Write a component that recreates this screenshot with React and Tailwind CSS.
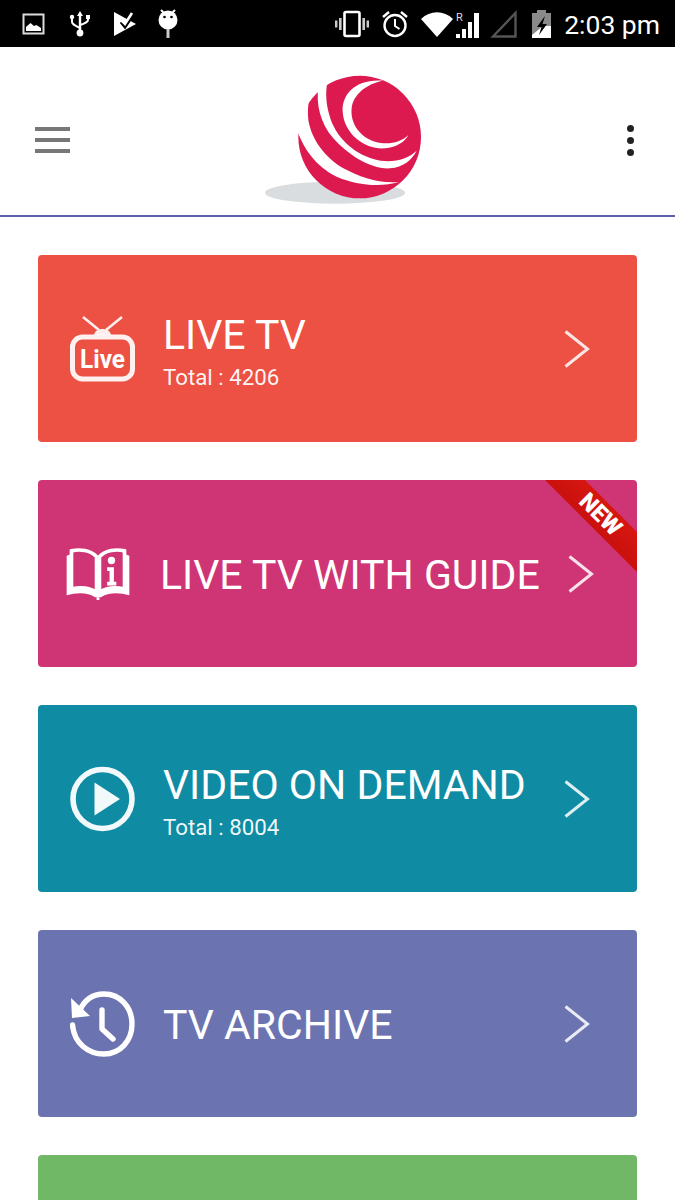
const Chevron = ({ className }) => (
  <svg className={className} width="28" height="40" viewBox="0 0 28 40" fill="none">
    <path d="M1.5 2.5 L23.5 20 L1.5 37.5" stroke="#fff" strokeWidth="3" opacity="0.85" />
  </svg>
);

const LiveIcon = () => (
  <svg width="68" height="68" viewBox="0 0 68 68" fill="none">
    <path d="M14 2 L30 15 M53 2 L37 15" stroke="#fff" strokeWidth="2.6" opacity="0.9" />
    <path d="M25 20 C26 12 41 12 42 20 Z" fill="#fff" opacity="0.9" />
    <rect x="3.5" y="22" width="60" height="42" rx="10" stroke="#fff" strokeWidth="5" opacity="0.92" />
    <text x="33.5" y="53" textAnchor="middle" fill="#fff" fontFamily="Roboto, sans-serif" fontWeight="700" fontSize="25" textLength="45" lengthAdjust="spacingAndGlyphs">Live</text>
  </svg>
);

const BookIcon = () => (
  <svg width="66" height="54" viewBox="0 0 68 56" fill="none">
    <path d="M7 7 L1.5 9 L1.5 50 C12 47 24 47 31 52 L37 52 C44 47 56 47 66.5 50 L66.5 9 L61 7 L61 44 C52 42 42 43 36 47 L32 47 C26 43 16 42 7 44 Z" fill="#fff" />
    <path d="M32.5 10 C26 3 15 2 6.5 4 L6.5 43.5 C16 41.5 26 42.5 32.5 47 Z M35.5 10 C42 3 53 2 61.5 4 L61.5 43.5 C52 41.5 42 42.5 35.5 47 Z" stroke="#fff" strokeWidth="3.8" />
    <path d="M34 52 V55" stroke="#fff" strokeWidth="3" />
    <circle cx="48" cy="14" r="3.8" fill="#fff" />
    <path d="M43.5 21 H50.5 V36 H53 V40 H43.5 V36 H46 V25 H43.5 Z" fill="#fff" />
  </svg>
);

const PlayIcon = () => (
  <svg width="66" height="66" viewBox="0 0 66 66" fill="none">
    <circle cx="32.5" cy="33" r="29.5" stroke="#fff" strokeWidth="5.6" opacity="0.95" />
    <path d="M24.5 16.5 L50 33 L24.5 49.5 Z" fill="#fff" opacity="0.95" />
  </svg>
);

const HistoryIcon = () => (
  <svg width="66" height="66" viewBox="0 0 66 66" fill="none">
    <path d="M9 21 C14 9 23 3 34 3 C50 3 62 16 62 33 C62 50 50 63 34 63 C18 63 4 52 2.5 34" stroke="#fff" strokeWidth="5.4" strokeLinecap="round" />
    <path d="M1 7 L2 27 L20 25 Z" fill="#fff" />
    <path d="M32 19 V38 L43 48" stroke="#fff" strokeWidth="5.4" strokeLinecap="round" strokeLinejoin="round" />
  </svg>
);

const StatusLeft = () => (
  <div className="flex items-center">
    <svg className="ml-[22px]" width="24" height="24" viewBox="0 0 24 24" fill="none">
      <rect x="1.5" y="2.5" width="20" height="19" stroke="#ddd" strokeWidth="2" />
      <path d="M4 19 V15 L8.5 11 L12 14 L14.5 13 L19 16 V19 Z" fill="#fff" />
    </svg>
    <svg className="ml-[22px]" width="24" height="30" viewBox="0 0 24 30" fill="none">
      <path d="M12 2 L15 7 H13.2 V21 H10.8 V7 H9 Z" fill="#fff" />
      <path d="M4 9 V13 C4 15 6 16 12 19 M20 9 V11 C20 13 18 14 12 16" stroke="#fff" strokeWidth="2" />
      <circle cx="4" cy="8" r="2.2" fill="#fff" />
      <rect x="18" y="6" width="4" height="4" fill="#fff" />
      <circle cx="12" cy="24" r="3.4" fill="#fff" />
    </svg>
    <svg className="ml-[20px]" width="26" height="28" viewBox="0 0 26 28" fill="none">
      <path d="M2 2 L24 14 L2 26 Z" fill="#fff" />
      <path d="M9 12 L13 17 L21 5" stroke="#000" strokeWidth="3" />
      <path d="M9 10 L13 14 L20 3" stroke="#fff" strokeWidth="2.6" />
    </svg>
    <svg className="ml-[19px]" width="22" height="30" viewBox="0 0 22 30" fill="none">
      <circle cx="11" cy="11" r="9.5" fill="#fff" />
      <path d="M4 1 L7 4 M18 1 L15 4" stroke="#fff" strokeWidth="2" />
      <circle cx="7.5" cy="8" r="1.3" fill="#000" />
      <circle cx="14.5" cy="8" r="1.3" fill="#000" />
      <rect x="9.5" y="20" width="3" height="9" fill="#ccc" />
    </svg>
  </div>
);

const StatusRight = () => (
  <div className="ml-auto flex items-center">
    <svg width="36" height="28" viewBox="0 0 36 28" fill="none">
      <rect x="10.5" y="2" width="15" height="24" rx="1.5" stroke="#fff" strokeWidth="2.6" />
      <rect x="5" y="8" width="2.6" height="12" fill="#ccc" />
      <rect x="1" y="10.5" width="2.4" height="7" fill="#ccc" />
      <rect x="28.4" y="8" width="2.6" height="12" fill="#ccc" />
      <rect x="32.6" y="10.5" width="2.4" height="7" fill="#ccc" />
    </svg>
    <svg className="ml-[11px]" width="28" height="28" viewBox="0 0 28 28" fill="none">
      <circle cx="14" cy="15.5" r="10.5" stroke="#fff" strokeWidth="2.4" />
      <path d="M14 9 V16 L18.5 19" stroke="#fff" strokeWidth="2" />
      <path d="M2 7 L8 2 M26 7 L20 2" stroke="#fff" strokeWidth="2.4" />
    </svg>
    <svg className="ml-[12px]" width="32" height="26" viewBox="0 0 32 26" fill="none">
      <path d="M0 8 C9 -1 23 -1 32 8 L16 26 Z" fill="#fff" />
    </svg>
    <svg className="ml-[3px]" width="26" height="28" viewBox="0 0 26 28" fill="none">
      <text x="0" y="11" fill="#ddd" fontFamily="Roboto, sans-serif" fontSize="11">R</text>
      <rect x="0" y="24" width="4" height="4" fill="#fff" />
      <rect x="6" y="19" width="4" height="9" fill="#fff" />
      <rect x="12" y="12" width="4" height="16" fill="#fff" />
      <rect x="18" y="3" width="5" height="25" fill="#fff" />
    </svg>
    <svg className="ml-[8px]" width="28" height="28" viewBox="0 0 28 28" fill="none">
      <path d="M3 26.5 L25.5 3 V26.5 Z" stroke="#555" strokeWidth="2.4" />
    </svg>
    <svg className="ml-[13px]" width="22" height="30" viewBox="0 0 22 30" fill="none">
      <path d="M6 1 H15 V4 H20 V29 H1 V4 H6 Z" fill="#8a8a8a" />
      <path d="M1 29 V26 L12 17 L20 17 V29 Z" fill="#fff" />
      <path d="M14 7 L6 18 H10.5 L8 26 L16 15 H11.5 Z" fill="#000" />
    </svg>
    <span className="ml-[11px] mr-[15px] pt-[3px] text-[26.5px] leading-none text-white">2:03 pm</span>
  </div>
);

const Logo = () => (
  <svg className="blur-[0.4px]" width="200" height="160" viewBox="0 0 600 480" fill="none">
    <ellipse cx="285" cy="398" rx="210" ry="33" fill="#d9dde0" />
    <circle cx="359" cy="231" r="184" fill="#dc1a50" />
    <path d="M430 62 C350 55 305 100 308 155 C312 225 380 270 435 265 C470 262 495 245 505 225 C480 250 440 255 405 245 C360 232 330 190 335 145 C338 105 380 70 430 62 Z" fill="#fff" />
    <path d="M235 85 C228 130 240 190 280 235 C325 285 390 328 450 325 C490 322 515 300 530 272 C500 300 450 312 400 297 C340 280 285 230 268 165 C258 130 256 100 262 66 Z" fill="#fff" />
    <path d="M168 198 C185 262 230 322 290 350 C350 376 420 382 478 366 C420 372 360 352 310 325 C255 292 215 240 205 180 C203 160 203 140 208 118 Z" fill="#fff" />
  </svg>
);

const MenuCard = ({ color, icon, title, total, guide }) => (
  <div className={`relative flex h-[187px] items-center overflow-hidden rounded-[4px] ${guide ? "pl-[26px]" : "pl-[31px]"} ${color}`}>
    <div className="flex w-[68px] shrink-0 items-center justify-center">{icon}</div>
    <div className={`flex flex-col ${total ? "pt-[6px]" : "pt-[2px]"} ${guide ? "ml-[28px]" : "ml-[26px]"}`}>
      <span className="text-[41px] leading-[46px] text-white">{title}</span>
      {total && <span className="mt-[5px] text-[22.3px] leading-[28px] text-white/95">{total}</span>}
    </div>
    <Chevron className={`absolute top-1/2 -translate-y-1/2 ${guide ? "left-[530px]" : "left-[526px]"}`} />
    {guide && (
      <>
        <svg className="absolute right-0 top-0" width="92" height="92" viewBox="0 0 92 92">
          <defs>
            <linearGradient id="ribbon" x1="1" y1="0" x2="0" y2="1">
              <stop offset="0.2" stopColor="#dc1a12" />
              <stop offset="0.55" stopColor="#c60f0c" />
            </linearGradient>
          </defs>
          <path d="M0 0 H40 L92 52 V92 Z" fill="url(#ribbon)" />
        </svg>
        <span className="absolute right-[12px] top-[23px] rotate-45 text-[23px] font-black leading-none text-white">NEW</span>
      </>
    )}
  </div>
);

export default function App() {
  return (
    <div className="h-[1200px] overflow-hidden bg-white font-['Roboto',sans-serif]">
      <div className="flex h-[47px] items-center bg-black">
        <StatusLeft />
        <StatusRight />
      </div>

      <header className="flex h-[170px] items-center border-b-2 border-[#5f5fa8] pt-[18px]">
        <div className="ml-[35px] flex w-[35px] flex-col gap-[7px]">
          <span className="h-[4px] bg-[#777]" />
          <span className="h-[4px] bg-[#777]" />
          <span className="h-[4px] bg-[#777]" />
        </div>
        <div className="ml-[170px]">
          <Logo />
        </div>
        <div className="ml-auto mr-[41px] flex flex-col gap-[5px]">
          <span className="h-[7px] w-[7px] rounded-full bg-[#222]" />
          <span className="h-[7px] w-[7px] rounded-full bg-[#222]" />
          <span className="h-[7px] w-[7px] rounded-full bg-[#222]" />
        </div>
      </header>

      <main className="mx-[38px] mt-[38px] flex flex-col gap-[38px]">
        <MenuCard color="bg-[#ec5143]" icon={<LiveIcon />} title="LIVE TV" total="Total : 4206" />
        <MenuCard color="bg-[#cf3575]" icon={<BookIcon />} title="LIVE TV WITH GUIDE" guide />
        <MenuCard color="bg-[#0f8ba3]" icon={<PlayIcon />} title="VIDEO ON DEMAND" total="Total : 8004" />
        <MenuCard color="bg-[#6b74b1]" icon={<HistoryIcon />} title="TV ARCHIVE" />
        <MenuCard color="bg-[#70b866]" title="" />
      </main>
    </div>
  );
}
